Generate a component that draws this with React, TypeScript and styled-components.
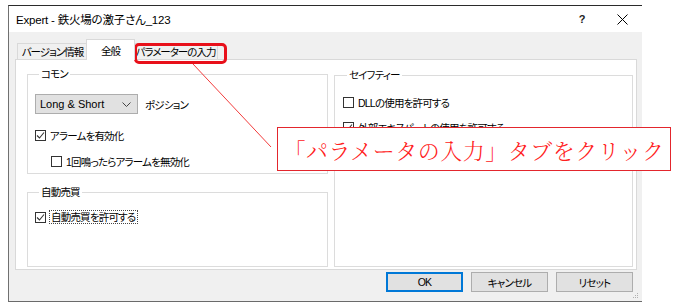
import React from "react";
import styled, { createGlobalStyle } from "styled-components";

const uiFont = `"Liberation Sans", "Noto Sans CJK JP", sans-serif`;

const GlobalStyle = createGlobalStyle`
  html, body {
    margin: 0;
    padding: 0;
    background: #ffffff;
  }
  body {
    font-family: ${uiFont};
  }
`;

export default function App() {
  return (
    <>
      <GlobalStyle />
      <Page>
        <Dialog>
          <TitleBar>
            <TitleText>Expert - 鉄火場の激子さん_123</TitleText>
            <CaptionButton>
              <HelpMark>?</HelpMark>
            </CaptionButton>
            <CaptionButton>
              <svg width="11" height="11" viewBox="0 0 11 11">
                <path d="M0.5 0.5 L10.5 10.5 M10.5 0.5 L0.5 10.5" stroke="#000" strokeWidth="1" />
              </svg>
            </CaptionButton>
          </TitleBar>

          <Body>
            <TabStrip>
              <Tab $w={71}>バージョン情報</Tab>
              <Tab $w={49} $active>
                全般
              </Tab>
              <Tab $w={85}>パラメーターの入力</Tab>
            </TabStrip>

            <Panel>
              <Column>
                <Group $h={107} $pad={7}>
                  <Legend>コモン</Legend>
                  <SelectRow>
                    <Select>
                      <span>Long &amp; Short</span>
                      <svg width="9" height="5" viewBox="0 0 9 5">
                        <path d="M0.5 0.5 L4.5 4.5 L8.5 0.5" fill="none" stroke="#444" strokeWidth="1" />
                      </svg>
                    </Select>
                    <span>ポジション</span>
                  </SelectRow>
                  <CheckRow $top={14}>
                    <CheckBox checked />
                    <span>アラームを有効化</span>
                  </CheckRow>
                  <CheckRow $top={12} $indent={16}>
                    <CheckBox />
                    <span>1回鳴ったらアラームを無効化</span>
                  </CheckRow>
                </Group>

                <Group $h={82} $pad={7}>
                  <Legend>自動売買</Legend>
                  <CheckRow $top={11} $gap={3}>
                    <CheckBox checked />
                    <FocusLabel>自動売買を許可する</FocusLabel>
                  </CheckRow>
                </Group>
              </Column>

              <Column>
                <Group $h={199} $pad={8} $offset={1}>
                  <Legend>セイフティー</Legend>
                  <CheckRow $top={13}>
                    <CheckBox />
                    <span>DLLの使用を許可する</span>
                  </CheckRow>
                  <CheckRow $top={11}>
                    <CheckBox checked />
                    <span>外部エキスパートの使用を許可する</span>
                  </CheckRow>
                </Group>
              </Column>
            </Panel>

            <ButtonRow>
              <Button $primary>OK</Button>
              <Button>キャンセル</Button>
              <Button>リセット</Button>
            </ButtonRow>
          </Body>

          <Grip width="6" height="6" viewBox="0 0 6 6">
            <rect x="4" y="0" width="1" height="1" fill="#b0b0b0" />
            <rect x="2" y="2" width="1" height="1" fill="#b0b0b0" />
            <rect x="4" y="2" width="1" height="1" fill="#b0b0b0" />
            <rect x="0" y="4" width="1" height="1" fill="#b0b0b0" />
            <rect x="2" y="4" width="1" height="1" fill="#b0b0b0" />
            <rect x="4" y="4" width="1" height="1" fill="#b0b0b0" />
          </Grip>
        </Dialog>

        <TabHighlight />
        <PointerLine width="680" height="306" viewBox="0 0 680 306">
          <line x1="193" y1="64" x2="271" y2="147" stroke="#f23c3c" strokeWidth="1" />
        </PointerLine>
        <Callout>「パラメータの入力」タブをクリック</Callout>
      </Page>
    </>
  );
}

function CheckBox({ checked = false }: { checked?: boolean }) {
  return (
    <Box>
      {checked && (
        <svg width="9" height="9" viewBox="0 0 9 9">
          <path d="M1 4.5 L3.5 7 L8 1.5" fill="none" stroke="#333" strokeWidth="1.1" />
        </svg>
      )}
    </Box>
  );
}

const Page = styled.div`
  position: relative;
  width: 680px;
  height: 306px;
  overflow: hidden;
  box-sizing: border-box;
  padding: 5px 0 0 8px;
`;

const Dialog = styled.div`
  position: relative;
  width: 634px;
  height: 297px;
  box-sizing: border-box;
  border-top: 1px solid #2b2b2b;
  border-left: 1px solid #707070;
  border-bottom: 1px solid #6a6a6a;
  display: flex;
  flex-direction: column;
  font-family: ${uiFont};
  font-size: 10.5px;
  letter-spacing: -0.8px;
  font-feature-settings: "palt";
  color: #000;
`;

const TitleBar = styled.div`
  height: 26px;
  display: flex;
  align-items: center;
  background: #ffffff;
  padding-left: 7px;
`;

const TitleText = styled.div`
  flex: 1;
  font-size: 11.5px;
  letter-spacing: -0.2px;
`;

const CaptionButton = styled.div`
  width: 40px;
  height: 26px;
  display: flex;
  align-items: center;
  justify-content: center;
`;

const HelpMark = styled.span`
  font-size: 11px;
  font-weight: bold;
  letter-spacing: 0;
  color: #222;
`;

const Body = styled.div`
  flex: 1;
  background: #f0f0f0;
  display: flex;
  flex-direction: column;
  padding: 0 5px 0 6px;
`;

const TabStrip = styled.div`
  height: 27px;
  display: flex;
  align-items: flex-end;
  padding-left: 2px;
`;

const Tab = styled.div<{ $active?: boolean; $w: number }>`
  position: relative;
  z-index: ${(p) => (p.$active ? 1 : 0)};
  width: ${(p) => p.$w}px;
  height: ${(p) => (p.$active ? 21 : 16)}px;
  margin: ${(p) => (p.$active ? "0 -2px -1px" : "0")};
  box-sizing: border-box;
  border: 1px solid #d9d9d9;
  border-bottom: none;
  background: ${(p) => (p.$active ? "#ffffff" : "#f0f0f0")};
  display: flex;
  align-items: center;
  justify-content: center;
  padding-top: ${(p) => (p.$active ? 1 : 0)}px;
  white-space: nowrap;
  font-size: 10.5px;
  letter-spacing: -1px;
`;

const Panel = styled.div`
  height: 211px;
  box-sizing: border-box;
  background: #ffffff;
  border: 1px solid #d9d9d9;
  display: grid;
  grid-template-columns: 301px 299px;
  column-gap: 6px;
  padding: 7px 3px 3px 11px;
`;

const Column = styled.div`
  display: flex;
  flex-direction: column;
  gap: 11px;
`;

const Group = styled.fieldset<{ $h: number; $pad: number; $offset?: number }>`
  margin: ${(p) => p.$offset ?? 0}px 0 0 0;
  padding: 0 0 0 ${(p) => p.$pad}px;
  height: ${(p) => p.$h}px;
  box-sizing: border-box;
  border: 1px solid #dcdcdc;
  min-width: 0;
`;

const Legend = styled.legend`
  padding: 0 2px;
  margin-left: 4px;
  line-height: 14px;
`;

const SelectRow = styled.div`
  margin-top: 13px;
  display: flex;
  align-items: center;
  gap: 7px;
`;

const Select = styled.div`
  width: 103px;
  height: 20px;
  box-sizing: border-box;
  background: #e1e1e1;
  border: 1px solid #adadad;
  display: flex;
  align-items: center;
  justify-content: space-between;
  padding: 0 6px 0 4px;
  font-size: 11px;
  letter-spacing: 0;
`;

const CheckRow = styled.div<{ $top: number; $indent?: number; $gap?: number }>`
  margin-top: ${(p) => p.$top}px;
  padding-left: ${(p) => p.$indent ?? 0}px;
  height: 14px;
  display: flex;
  align-items: center;
  gap: ${(p) => p.$gap ?? 4}px;
  white-space: nowrap;
`;

const Box = styled.span`
  width: 11px;
  height: 11px;
  box-sizing: border-box;
  border: 1px solid #333;
  background: #fff;
  display: flex;
  align-items: center;
  justify-content: center;
  flex: none;
`;

const FocusLabel = styled.span`
  border: 1px dotted #444;
  padding: 0 2px 0 1px;
  line-height: 12px;
`;

const ButtonRow = styled.div`
  display: flex;
  justify-content: flex-end;
  gap: 8px;
  padding: 2px 4px 0 0;
`;

const Button = styled.div<{ $primary?: boolean }>`
  width: 77px;
  height: 20px;
  box-sizing: border-box;
  background: #e1e1e1;
  border: 1px solid ${(p) => (p.$primary ? "#0078d7" : "#adadad")};
  box-shadow: ${(p) => (p.$primary ? "inset 0 0 0 1px #0078d7" : "none")};
  display: flex;
  align-items: center;
  justify-content: center;
`;

const Grip = styled.svg`
  position: absolute;
  right: 3px;
  bottom: 2px;
`;

const TabHighlight = styled.div`
  position: absolute;
  left: 134px;
  top: 43px;
  width: 93px;
  height: 21px;
  box-sizing: border-box;
  border: 3px solid #e8101a;
  border-radius: 5px;
`;

const PointerLine = styled.svg`
  position: absolute;
  left: 0;
  top: 0;
  pointer-events: none;
`;

const Callout = styled.div`
  position: absolute;
  left: 277px;
  top: 127px;
  width: 394px;
  height: 44px;
  box-sizing: border-box;
  border: 1px solid #e3262d;
  background: #ffffff;
  display: flex;
  align-items: center;
  justify-content: center;
  font-family: "Noto Serif CJK JP", "Noto Sans CJK JP", serif;
  font-weight: 300;
  font-size: 22px;
  letter-spacing: 0.5px;
  color: #ff2020;
  white-space: nowrap;
`;
